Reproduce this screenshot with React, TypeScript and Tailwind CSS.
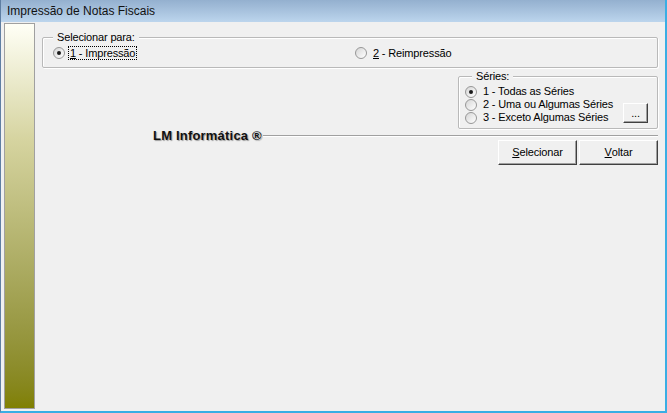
import React from 'react';

function Radio({ checked }: { checked?: boolean }) {
  return (
    <span className="relative flex h-[12px] w-[12px] shrink-0 items-center justify-center rounded-full border border-[#979797] bg-gradient-to-br from-[#d6d6d6] to-[#ffffff]">
      {checked && <span className="h-[4px] w-[4px] rounded-full bg-[#1a1a1a]" />}
    </span>
  );
}

function Btn({ mn, rest }: { mn: string; rest: string }) {
  return (
    <button className="flex h-[25px] w-[79px] items-center justify-center border border-t-white border-l-white border-r-[#404040] border-b-[#404040] bg-[#f0f0f0] text-[11px] text-black shadow-[inset_-1px_-1px_0_#a0a0a0]">
      <span className="underline">{mn}</span>
      {rest}
    </button>
  );
}

export default function App() {
  return (
    <div className="flex h-[413px] w-[667px] flex-col overflow-hidden border-l border-r-2 border-b-2 border-l-[#5f7fa3] border-r-[#3aaee4] border-b-[#3aaee4] bg-[#f0f0f0] font-['Liberation_Sans',Arial,sans-serif] text-black">
      {/* title bar */}
      <div className="flex h-[22px] shrink-0 items-center bg-gradient-to-b from-[#94b0cf] to-[#bcd5ed] pl-[6px] text-[12px] text-[#111]">
        Impressão de Notas Fiscais
      </div>

      <div className="flex flex-1">
        {/* left decorative panel */}
        <div className="ml-[3px] mt-[1px] h-[386px] w-[31px] shrink-0 border border-[#a0a0a0] bg-gradient-to-b from-[#fffff6] via-[#d6d4a0] via-30% to-[#808000]" />

        <div className="flex flex-1 flex-col pl-[7px] pr-[7px] pt-[15px] tracking-[-0.15px]">
          {/* Selecionar para */}
          <div className="relative flex h-[31px] items-center rounded-[2px] border border-[#b9b9b9] pl-[10px] shadow-[inset_1px_1px_0_#fff,1px_1px_0_#fff]">
            <span className="absolute -top-[8px] left-[10px] bg-[#f0f0f0] px-[4px] text-[11px] leading-[14px]">
              Selecionar para:
            </span>
            <div className="flex w-[302px] items-center gap-[3px]">
              <Radio checked />
              <span className="border border-dotted border-black px-[1px] text-[11px] leading-[12px]">
                <span className="underline">1</span> - Impressão
              </span>
            </div>
            <div className="flex items-center gap-[6px]">
              <Radio />
              <span className="text-[11px] leading-[12px]">
                <span className="underline">2</span> - Reimpressão
              </span>
            </div>
          </div>

          {/* Séries */}
          <div className="relative mt-[8px] flex h-[53px] w-[200px] self-end rounded-[2px] border border-[#b9b9b9] pl-[6px] pt-[8px] shadow-[inset_1px_1px_0_#fff,1px_1px_0_#fff]">
            <span className="absolute -top-[8px] left-[13px] bg-[#f0f0f0] px-[4px] text-[11px] leading-[14px]">
              Séries:
            </span>
            <div className="flex flex-col">
              {['1 - Todas as Séries', '2 - Uma ou Algumas Séries', '3 - Exceto Algumas Séries'].map((t, i) => (
                <div key={t} className="flex h-[13px] items-center gap-[6px]">
                  <Radio checked={i === 0} />
                  <span className="text-[11px] leading-[13px]">{t}</span>
                </div>
              ))}
            </div>
            <button className="ml-auto mr-[9px] mt-[18px] flex h-[20px] w-[25px] items-center justify-center border border-t-white border-l-white border-r-[#404040] border-b-[#404040] bg-[#f0f0f0] text-[11px] leading-none shadow-[inset_-1px_-1px_0_#a0a0a0]">
              ...
            </button>
          </div>

          {/* brand line */}
          <div className="flex h-[14px] items-center pl-[111px]">
            <span className="whitespace-nowrap text-[13px] font-bold leading-[14px] tracking-[0.2px] text-[#111] [text-shadow:1px_1px_1px_#9a9a9a]">
              LM Informática ®
            </span>
            <div className="ml-[1px] h-[2px] flex-1 border-t border-t-[#a0a0a0] border-b border-b-white" />
          </div>

          {/* buttons */}
          <div className="mt-[-3px] flex justify-end gap-[2px]">
            <Btn mn="S" rest="elecionar" />
            <Btn mn="V" rest="oltar" />
          </div>
        </div>
      </div>
    </div>
  );
}
